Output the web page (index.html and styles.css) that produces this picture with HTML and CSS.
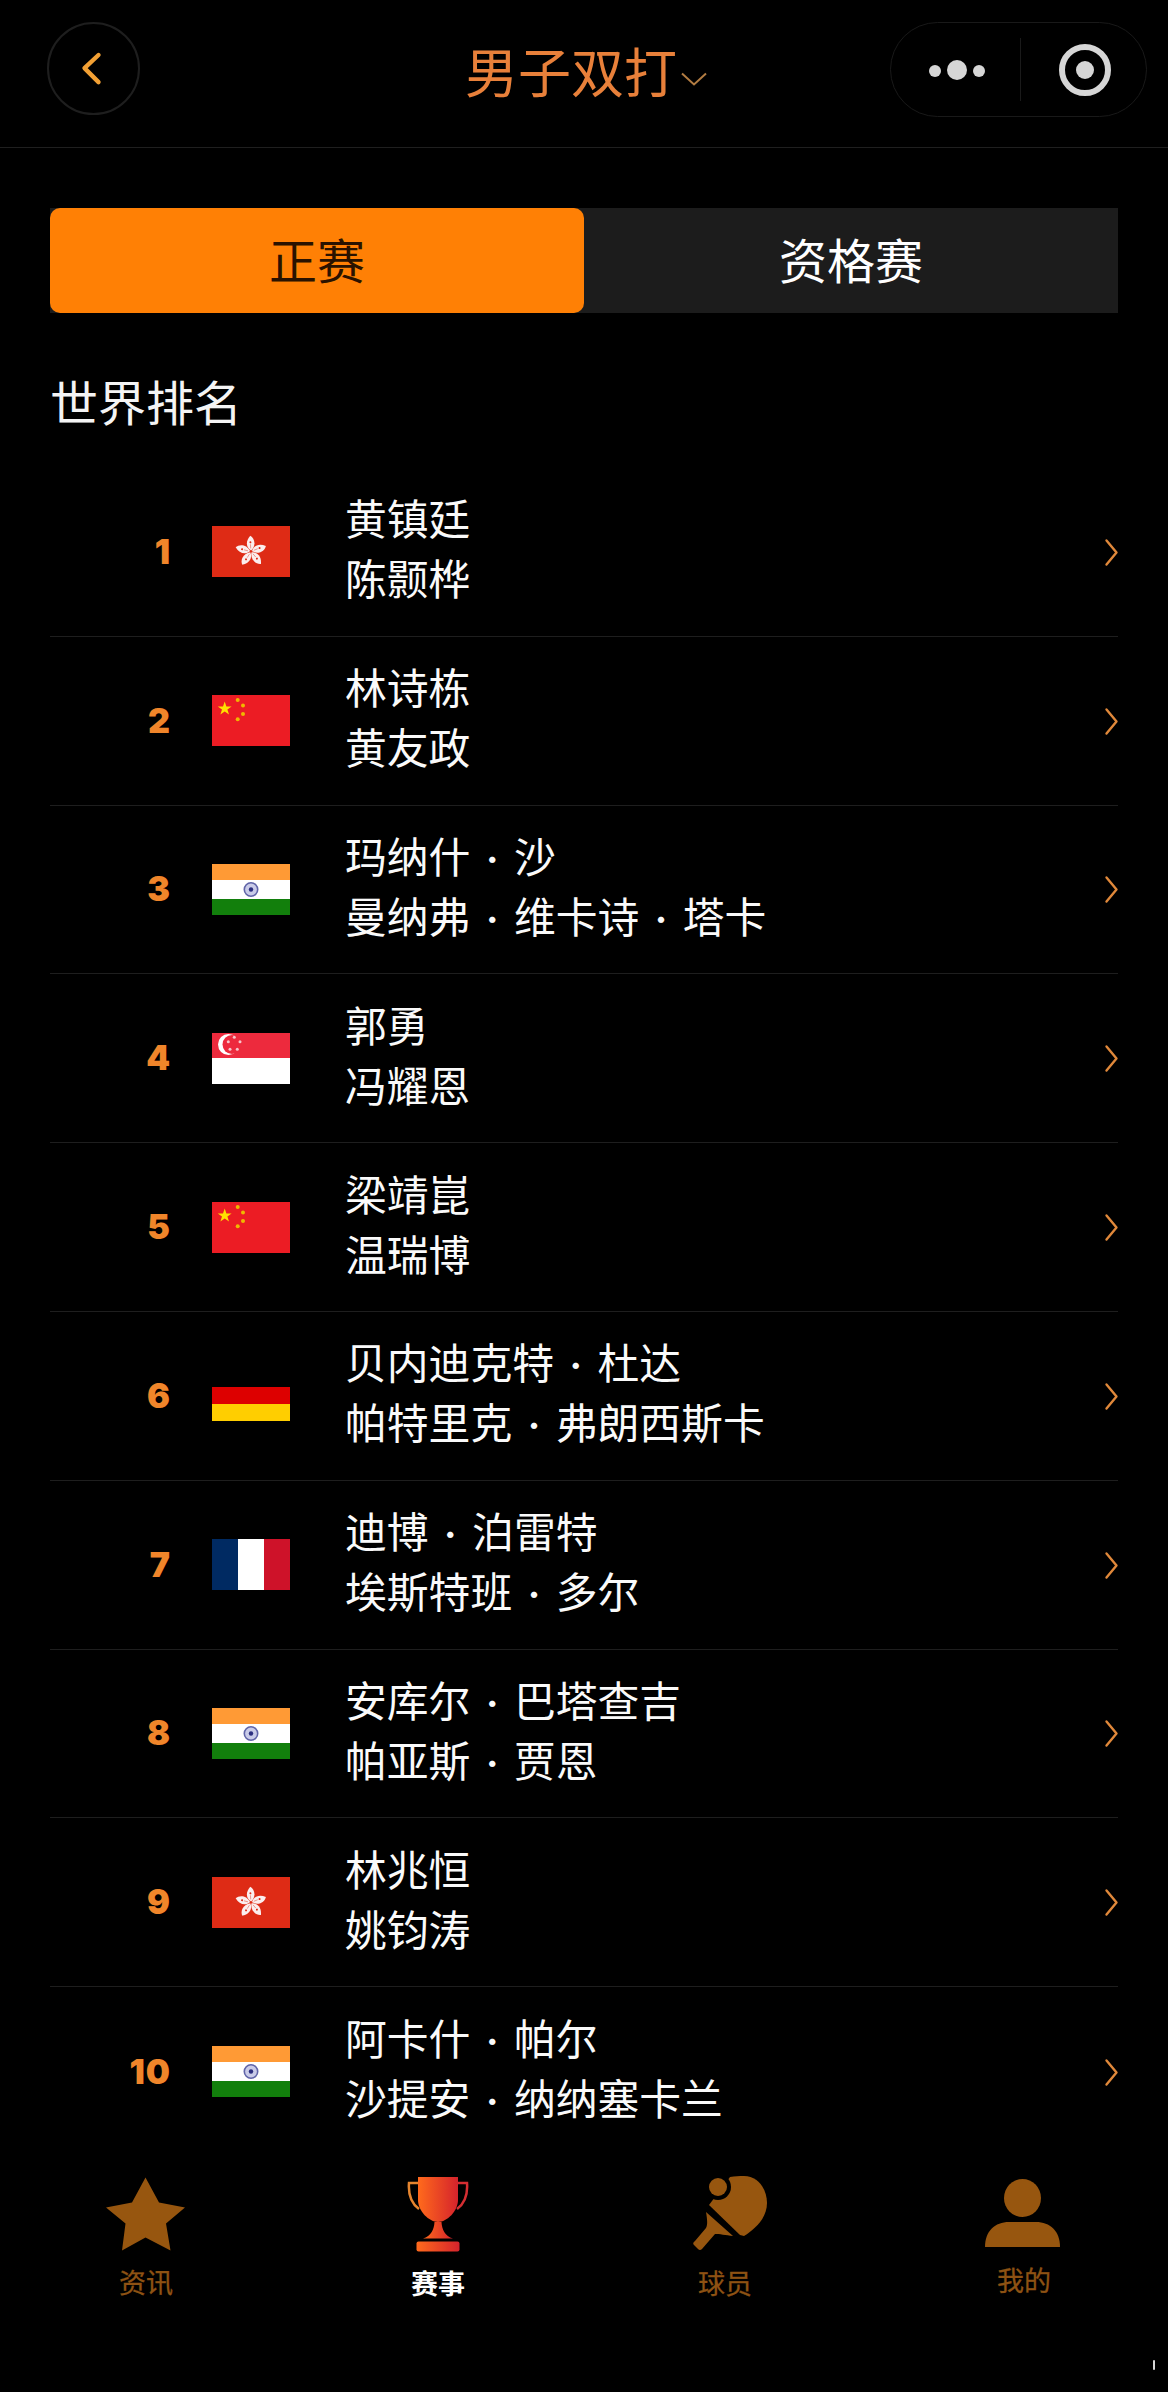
FILE: index.html
```html
<!DOCTYPE html>
<html lang="zh">
<head>
<meta charset="utf-8">
<title>男子双打</title>
<link rel="stylesheet" href="styles.css">
</head>
<body>
<svg class="defs" width="0" height="0" aria-hidden="true">
  <defs>
    <linearGradient id="cup" x1="0" x2="1" y1="0" y2="0">
      <stop offset="0" stop-color="#ff6a1c"/>
      <stop offset="1" stop-color="#d5232c"/>
    </linearGradient>
    <g id="petal">
      <path d="M0-1C-5.500-3-7.500-9-3.500-15.500C1-14 4.500-7.500 0-1Z" fill="#fbeeee"/>
      <circle cx="-2.200" cy="-9" r="1" fill="#de2a14"/>
      <path d="M-.8-3L-1.800-7" stroke="#e58a80" stroke-width=".8"/>
    </g>
    <symbol id="hk" viewBox="0 0 78 51">
      <rect width="78" height="51" fill="#de2b15"/>
      <g transform="translate(39 25.500)">
        <use href="#petal" transform="rotate(10)"/>
        <use href="#petal" transform="rotate(82)"/>
        <use href="#petal" transform="rotate(154)"/>
        <use href="#petal" transform="rotate(226)"/>
        <use href="#petal" transform="rotate(298)"/>
      </g>
    </symbol>
    <symbol id="cn" viewBox="0 0 78 51">
      <rect width="78" height="51" fill="#ec1c24"/>
      <path d="M12.700 6.500l1.700 4.900 5.200 0-4.200 3.100 1.600 5-4.300-3.100-4.300 3.100 1.600-5-4.200-3.100 5.200 0z" fill="#ffe000"/>
      <circle cx="25.700" cy="5" r="2" fill="#f0b800"/>
      <circle cx="31" cy="10.500" r="2" fill="#f0b800"/>
      <circle cx="31" cy="19" r="2" fill="#f0b800"/>
      <circle cx="25.700" cy="24.300" r="2" fill="#f0b800"/>
    </symbol>
    <symbol id="in" viewBox="0 0 78 51">
      <rect width="78" height="16" fill="#ff9a35"/>
      <rect y="16" width="78" height="19" fill="#fff"/>
      <rect y="35" width="78" height="16" fill="#127f0c"/>
      <circle cx="39" cy="25.500" r="6.700" fill="#c9cbe8" stroke="#6064a8" stroke-width="1.600"/>
      <circle cx="39" cy="25.500" r="2.200" fill="#2c2f80"/>
    </symbol>
    <symbol id="sg" viewBox="0 0 78 51">
      <rect width="78" height="25" fill="#ed2a3d"/>
      <rect y="25" width="78" height="26" fill="#fff"/>
      <circle cx="16.500" cy="11.500" r="10.500" fill="#fff"/>
      <circle cx="20" cy="11.500" r="9.500" fill="#ed2a3d"/>
      <g fill="#f7c5ca">
        <circle cx="22.300" cy="4.300" r="1.500"/>
        <circle cx="28" cy="8.700" r="1.500"/>
        <circle cx="25.300" cy="16.300" r="1.500"/>
        <circle cx="18" cy="16.300" r="1.500"/>
        <circle cx="16.300" cy="8.700" r="1.500"/>
      </g>
    </symbol>
    <symbol id="de" viewBox="0 0 78 51">
      <rect width="78" height="17" fill="#000"/>
      <rect y="17" width="78" height="17" fill="#dd0000"/>
      <rect y="34" width="78" height="17" fill="#ffce00"/>
    </symbol>
    <symbol id="fr" viewBox="0 0 78 51">
      <rect width="26" height="51" fill="#002a62"/>
      <rect x="26" width="26" height="51" fill="#fff"/>
      <rect x="52" width="26" height="51" fill="#ce1229"/>
    </symbol>
    <symbol id="arrow" viewBox="0 0 15 30">
      <path d="M2.500 3.500L12.500 15.500L2.500 27.500" fill="none" stroke="#e0883a" stroke-width="2.400" stroke-linecap="round" stroke-linejoin="round"/>
    </symbol>
  </defs>
</svg>

<header class="header">
  <button class="back" type="button" aria-label="返回">
    <svg class="back-icon" viewBox="0 0 24 40"><path d="M20 4L4 19L20 35" fill="none" stroke="#f2a034" stroke-width="5" stroke-linecap="round" stroke-linejoin="round"/></svg>
  </button>
  <div class="title">
    <span>男子双打</span>
    <svg class="title-caret" viewBox="0 0 26 14"><path d="M1 1.500L13 12.500L25 1.500" fill="none" stroke="#b27c42" stroke-width="2"/></svg>
  </div>
  <div class="capsule">
    <svg class="capsule-dots" viewBox="0 0 56 22">
      <circle cx="6" cy="12" r="6"/><circle cx="28" cy="11" r="10"/><circle cx="50" cy="12" r="6"/>
    </svg>
    <span class="capsule-divider"></span>
    <svg class="capsule-target" viewBox="0 0 52 52">
      <circle class="target-ring" cx="26" cy="26" r="23"/><circle class="target-dot" cx="26" cy="26" r="9"/>
    </svg>
  </div>
</header>

<main class="main">
  <div class="tabs">
    <div class="tab tab-active">正赛</div>
    <div class="tab">资格赛</div>
  </div>

  <h1 class="heading">世界排名</h1>

  <ul class="ranks">
    <li class="row">
      <span class="rank">1</span>
      <svg class="flag"><use href="#hk"/></svg>
      <div class="names"><div>黄镇廷</div><div>陈颢桦</div></div>
      <svg class="arrow"><use href="#arrow"/></svg>
    </li>
    <li class="row">
      <span class="rank">2</span>
      <svg class="flag"><use href="#cn"/></svg>
      <div class="names"><div>林诗栋</div><div>黄友政</div></div>
      <svg class="arrow"><use href="#arrow"/></svg>
    </li>
    <li class="row">
      <span class="rank">3</span>
      <svg class="flag"><use href="#in"/></svg>
      <div class="names"><div>玛纳什<span class="sep">·</span>沙</div><div>曼纳弗<span class="sep">·</span>维卡诗<span class="sep">·</span>塔卡</div></div>
      <svg class="arrow"><use href="#arrow"/></svg>
    </li>
    <li class="row">
      <span class="rank">4</span>
      <svg class="flag"><use href="#sg"/></svg>
      <div class="names"><div>郭勇</div><div>冯耀恩</div></div>
      <svg class="arrow"><use href="#arrow"/></svg>
    </li>
    <li class="row">
      <span class="rank">5</span>
      <svg class="flag"><use href="#cn"/></svg>
      <div class="names"><div>梁靖崑</div><div>温瑞博</div></div>
      <svg class="arrow"><use href="#arrow"/></svg>
    </li>
    <li class="row">
      <span class="rank">6</span>
      <svg class="flag"><use href="#de"/></svg>
      <div class="names"><div>贝内迪克特<span class="sep">·</span>杜达</div><div>帕特里克<span class="sep">·</span>弗朗西斯卡</div></div>
      <svg class="arrow"><use href="#arrow"/></svg>
    </li>
    <li class="row">
      <span class="rank">7</span>
      <svg class="flag"><use href="#fr"/></svg>
      <div class="names"><div>迪博<span class="sep">·</span>泊雷特</div><div>埃斯特班<span class="sep">·</span>多尔</div></div>
      <svg class="arrow"><use href="#arrow"/></svg>
    </li>
    <li class="row">
      <span class="rank">8</span>
      <svg class="flag"><use href="#in"/></svg>
      <div class="names"><div>安库尔<span class="sep">·</span>巴塔查吉</div><div>帕亚斯<span class="sep">·</span>贾恩</div></div>
      <svg class="arrow"><use href="#arrow"/></svg>
    </li>
    <li class="row">
      <span class="rank">9</span>
      <svg class="flag"><use href="#hk"/></svg>
      <div class="names"><div>林兆恒</div><div>姚钧涛</div></div>
      <svg class="arrow"><use href="#arrow"/></svg>
    </li>
    <li class="row">
      <span class="rank">10</span>
      <svg class="flag"><use href="#in"/></svg>
      <div class="names"><div>阿卡什<span class="sep">·</span>帕尔</div><div>沙提安<span class="sep">·</span>纳纳塞卡兰</div></div>
      <svg class="arrow"><use href="#arrow"/></svg>
    </li>
  </ul>
</main>

<nav class="nav">
  <div class="nav-item">
    <svg class="nav-icon icon-star" viewBox="0 0 79 73"><path d="M39.500 0L53 25L79 30L60 46L64.500 73L39.500 60L16 73L19.500 46L0 30L26 25Z"/></svg>
    <span class="nav-label">资讯</span>
  </div>
  <div class="nav-item nav-item-active">
    <svg class="nav-icon icon-cup" viewBox="0 0 62 76">
      <path class="cup-handle-l" d="M11 7H2C1 20 5 28 12 33"/>
      <path class="cup-handle-r" d="M51 7H60C61 20 57 28 50 33"/>
      <path fill="url(#cup)" d="M11 1H51V24C51 35 40 46 31 46C22 46 11 35 11 24Z"/>
      <path fill="url(#cup)" d="M27.500 46H34.500C35 54 38 60 46 62.500H16C24 60 27 54 27.500 46Z"/>
      <rect fill="url(#cup)" x="9.500" y="65.500" width="43" height="10" rx="2"/>
    </svg>
    <span class="nav-label">赛事</span>
  </div>
  <div class="nav-item nav-item-players">
    <svg class="nav-icon icon-paddle" viewBox="0 0 75 76">
      <path d="M51 0C65 0 74 13 74 27C74 42 62 53 51 60L47 59L16 29L37 1C42 0 46 0 51 0Z"/>
      <circle class="paddle-gap" cx="25" cy="11" r="13"/>
      <circle cx="25" cy="11" r="9"/>
      <path d="M13 36L40 60C33 59 26 58 22 58L9 73Q7 75 5 73L1 69Q-1 67 2 65L13 52C15 48 14 42 13 36Z"/>
    </svg>
    <span class="nav-label">球员</span>
  </div>
  <div class="nav-item nav-item-me">
    <svg class="nav-icon icon-user" viewBox="0 0 75 68">
      <ellipse cx="37.500" cy="19" rx="18.500" ry="19"/>
      <path d="M0 68C0 52 10 43 24 43H51C65 43 75 52 75 68Z"/>
    </svg>
    <span class="nav-label">我的</span>
  </div>
</nav>
<span class="speck"></span>
</body>
</html>
```

FILE: styles.css
```css
* {
  box-sizing: border-box;
}

html,
body {
  margin: 0;
  background: #000;
}

body {
  position: relative;
  height: 2392px;
  overflow: hidden;
  font-family: "Noto Sans CJK SC", "Noto Sans", sans-serif;
  color: #fff;
}

.defs {
  position: absolute;
}

/* header */
.header {
  display: flex;
  align-items: flex-start;
  height: 148px;
  padding: 22px 21px 0 47px;
  border-bottom: 1px solid #1f1f1f;
}

.back {
  display: flex;
  align-items: center;
  justify-content: center;
  flex: none;
  width: 93px;
  height: 93px;
  padding: 0 4px 0 0;
  border: 2px solid #1e1e1e;
  border-radius: 50%;
  background: none;
}

.back-icon {
  width: 21px;
  height: 36px;
}

.title {
  display: flex;
  align-items: center;
  margin: 16px 0 0 325px;
  font-size: 53px;
  line-height: 64px;
  color: #e8803a;
}

.title-caret {
  width: 26px;
  height: 14px;
  margin: 18px 0 0 4px;
}

.capsule {
  display: flex;
  align-items: center;
  width: 257px;
  height: 95px;
  margin-left: auto;
  padding-left: 38px;
  border: 1px solid #191919;
  border-radius: 48px;
}

.capsule-dots {
  width: 56px;
  height: 22px;
  fill: #d6d6d6;
}

.capsule-divider {
  width: 1px;
  height: 63px;
  margin-left: 35px;
  background: #1a1a1a;
}

.capsule-target {
  width: 52px;
  height: 52px;
  margin-left: 38px;
}

.target-ring {
  fill: none;
  stroke: #d6d6d6;
  stroke-width: 6;
}

.target-dot {
  fill: #d6d6d6;
}

/* tabs */
.main {
  padding: 60px 50px 0;
}

.tabs {
  display: flex;
  height: 105px;
  background: #1c1c1c;
}

.tab {
  display: flex;
  flex: 1;
  align-items: center;
  justify-content: center;
  padding-bottom: 6px;
  font-size: 48px;
  line-height: 1;
}

.tab-active {
  border-radius: 10px;
  background: #ff8005;
  color: #2a1200;
}

.heading {
  margin: 0;
  padding-top: 52px;
  font-size: 48px;
  font-weight: 400;
  line-height: 70px;
  color: #f4f4f4;
}

/* ranking */
.ranks {
  margin: 33px 0 0;
  padding: 0;
  list-style: none;
}

.row {
  display: flex;
  align-items: center;
  height: 168.8px;
  border-bottom: 1px solid #1e1e1e;
}

.row:last-child {
  border-bottom: 0;
}

.rank {
  flex: none;
  width: 121px;
  font-family: Inter, "DejaVu Sans", sans-serif;
  font-size: 34px;
  font-weight: 900;
  letter-spacing: 1px;
  line-height: 40px;
  text-align: right;
  color: #f0852a;
}

.flag {
  flex: none;
  width: 78px;
  height: 51px;
  margin-left: 41px;
}

.names {
  flex: 1;
  margin-left: 55px;
  padding-bottom: 9px;
  font-size: 41.8px;
  line-height: 60px;
  color: #fafafa;
}

.sep {
  display: inline-block;
  width: 43.5px;
  font-size: 30px;
  line-height: 1;
  text-align: center;
  vertical-align: 2px;
}

.arrow {
  flex: none;
  width: 15px;
  height: 30px;
  margin-right: -1px;
}

/* bottom nav */
.nav {
  display: flex;
  padding-top: 20px;
}

.nav-item {
  display: flex;
  flex: 1;
  flex-direction: column;
  align-items: center;
}

.nav-icon {
  height: 75px;
  fill: #97560f;
}

.icon-star {
  width: 79px;
  margin: 1px 2px 0 0;
  height: 74px;
}

.icon-cup {
  width: 62px;
  height: 76px;
}

.icon-paddle {
  width: 75px;
  height: 76px;
}

.icon-user {
  width: 75px;
  height: 68px;
  margin-top: 3px;
}

.cup-handle-l {
  fill: none;
  stroke: #e5852f;
  stroke-width: 2.500;
}

.cup-handle-r {
  fill: none;
  stroke: #d42e32;
  stroke-width: 2.500;
}

.paddle-gap {
  fill: #000;
}

.nav-label {
  margin-top: 16px;
  font-size: 27px;
  line-height: 30px;
  color: #8e5213;
  -webkit-text-stroke: 0.3px #8e5213;
}

.nav-item-active .nav-label {
  color: #fff;
  font-weight: 700;
  -webkit-text-stroke: 0;
}

.nav-item-players .nav-label {
  margin-right: 10px;
}

.nav-item-me .nav-label {
  margin: 18px 0 0 4px;
}

.speck {
  position: absolute;
  left: 1153px;
  top: 2360px;
  width: 2px;
  height: 10px;
  border-radius: 1px;
  background: #d8d8d8;
}
```
